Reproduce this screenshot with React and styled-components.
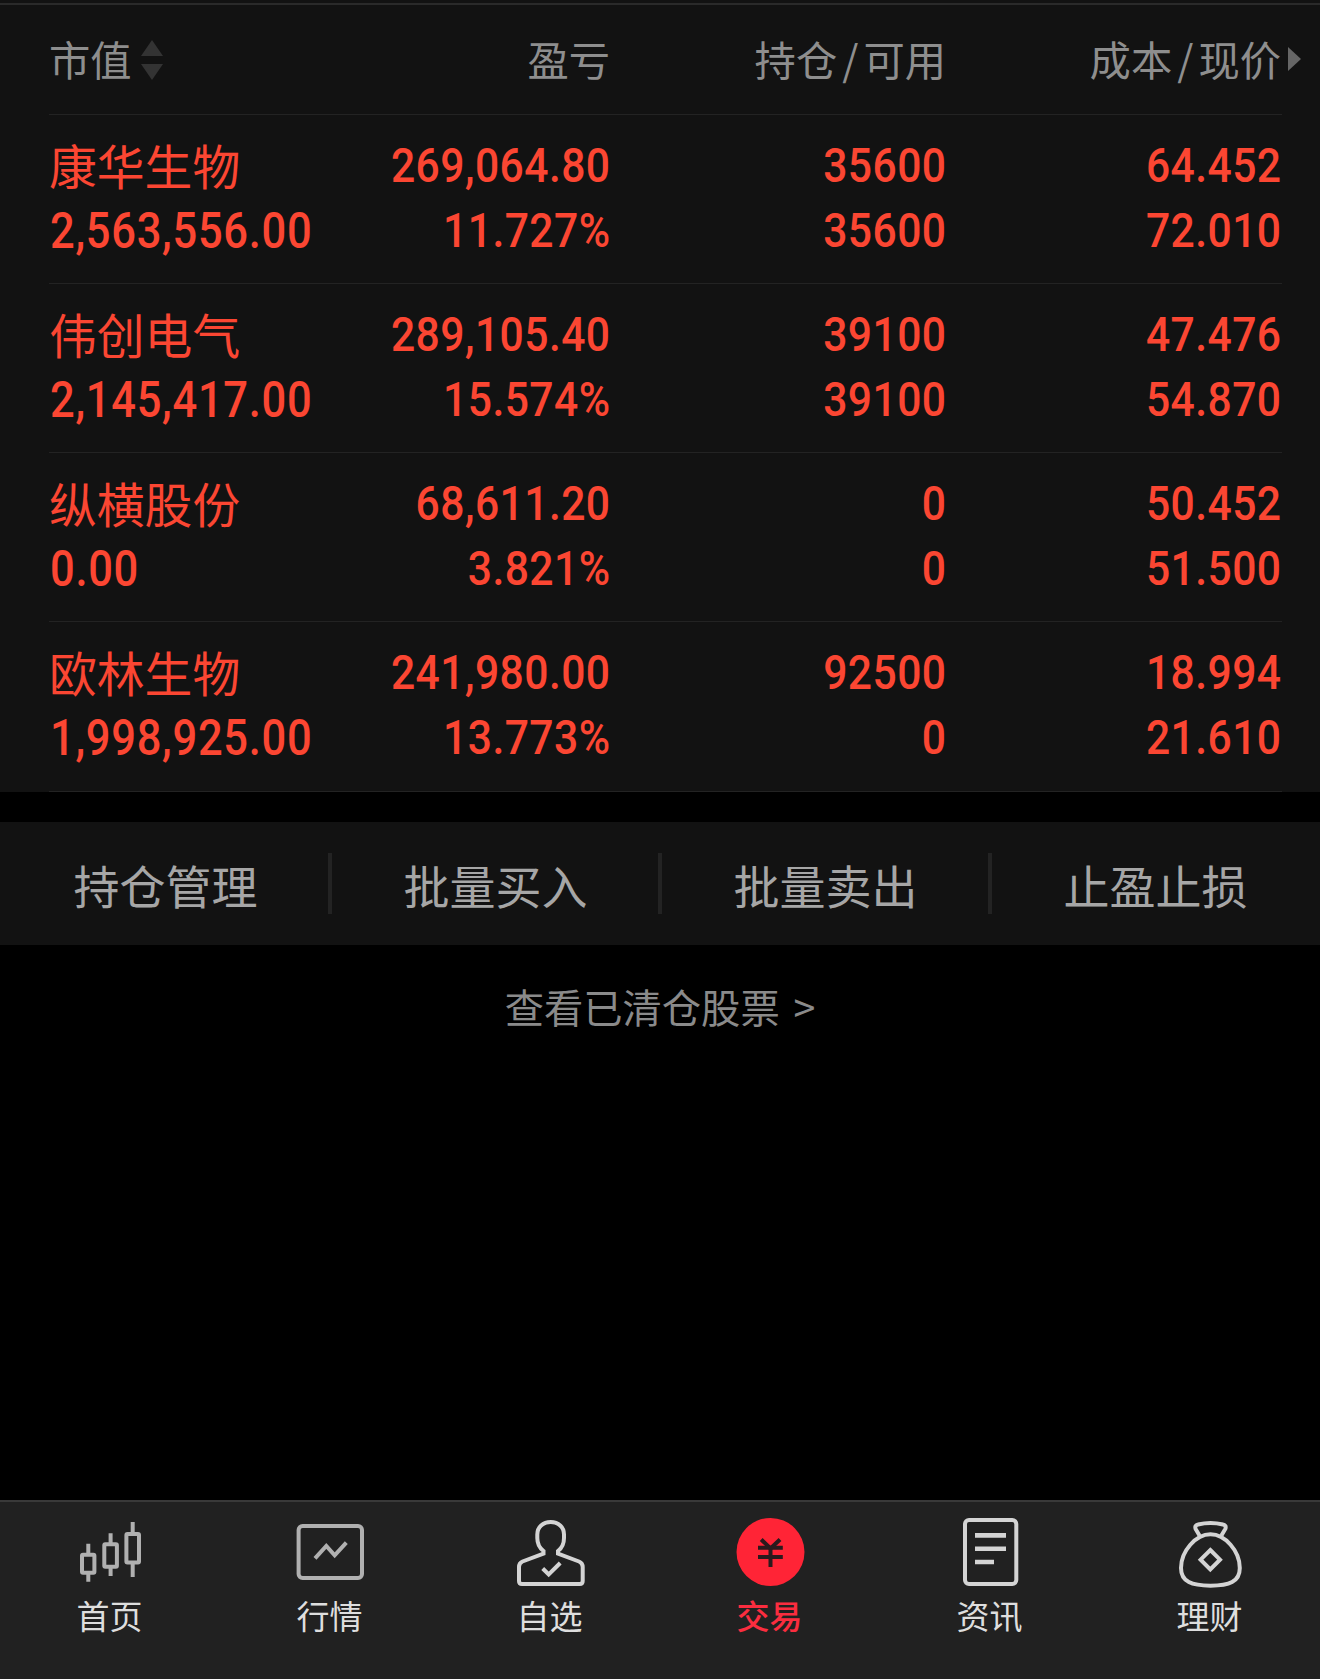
import React from 'react';
import styled, { createGlobalStyle } from 'styled-components';

const holdings = [
  {
    name: '康华生物',
    value: '2,563,556.00',
    profit: '269,064.80',
    rate: '11.727%',
    held: '35600',
    usable: '35600',
    cost: '64.452',
    price: '72.010',
  },
  {
    name: '伟创电气',
    value: '2,145,417.00',
    profit: '289,105.40',
    rate: '15.574%',
    held: '39100',
    usable: '39100',
    cost: '47.476',
    price: '54.870',
  },
  {
    name: '纵横股份',
    value: '0.00',
    profit: '68,611.20',
    rate: '3.821%',
    held: '0',
    usable: '0',
    cost: '50.452',
    price: '51.500',
  },
  {
    name: '欧林生物',
    value: '1,998,925.00',
    profit: '241,980.00',
    rate: '13.773%',
    held: '92500',
    usable: '0',
    cost: '18.994',
    price: '21.610',
  },
];

const actions = ['持仓管理', '批量买入', '批量卖出', '止盈止损'];

// Icons
const HomeIcon = () => (
  <Icon $color="#b0b0b0">
    <rect x="6" y="36.7" width="12.4" height="18" rx="1" />
    <path d="M12.3 25.7V36M12.3 56V63.7" />
    <rect x="28.3" y="26.3" width="12.6" height="22.4" rx="1" />
    <path d="M34.6 15.3V26M34.6 50V58" />
    <rect x="50.4" y="16" width="12.6" height="28.4" rx="1" />
    <path d="M56.7 4V15M56.7 45V59" />
  </Icon>
);

const MarketIcon = () => (
  <Icon $color="#b0b0b0">
    <rect x="2.6" y="8" width="63.4" height="52" rx="4" />
    <path d="M19 40.3L30.3 28L38.7 37.3L50.3 24.7" />
  </Icon>
);

const WatchIcon = () => (
  <Icon>
    <path d="M27.5 33C23.5 30 21.3 25 21.3 20V16.5C21.3 9 27 4 34.7 4S48 9 48 16.5V20C48 25 46 30 42 33V35.7L63 43.5Q66.7 45 66.7 49V63Q66.7 66 63.7 66H6Q3 66 3 63V49Q3 45 6.5 43.5L27.5 35.7Z" />
    <path d="M26.7 50.5L32.7 56.5L44.2 45" />
  </Icon>
);

const TradeIcon = () => (
  <Icon $color="#2a1a1d">
    <circle cx="34.5" cy="34" r="34" fill="#ff2436" stroke="none" />
    <path d="M25.2 21.5L34.5 30.5L44 21.5" />
    <path d="M22 29.8H46.8M22 39H46.8M34.5 29V49" />
  </Icon>
);

const NewsIcon = () => (
  <Icon>
    <rect x="9" y="2" width="51.3" height="64" rx="4" />
    <path d="M19 17.4H50M19 30.7H50M19 44H38" strokeWidth="4.6" />
  </Icon>
);

const WealthIcon = () => (
  <Icon>
    <path d="M34.5 16.3C20 16.3 5 33 5 50C5 64 16 67.7 34.5 67.7S63.8 64 63.8 50C63.8 33 49 16.3 34.5 16.3Z" />
    <path d="M23.5 17.5L19.6 11C18.8 8.5 19.6 7 22 6.5C29 4.8 40 4.8 47 6.5C49.5 7 50.2 8.5 49.3 11L45.4 17.5" />
    <path d="M34.3 32L44 41.7L34.3 51.4L24.6 41.7Z" />
  </Icon>
);

const tabs = [
  { label: '首页', icon: HomeIcon },
  { label: '行情', icon: MarketIcon },
  { label: '自选', icon: WatchIcon },
  { label: '交易', icon: TradeIcon, active: true },
  { label: '资讯', icon: NewsIcon },
  { label: '理财', icon: WealthIcon },
];

const App = () => {
  return (
    <Page>
      <GlobalStyle />
      <Holdings>
        <Header>
          <HeadCell>
            市值
            <Sort viewBox="0 0 22 40">
              <path d="M11 0L22 16H0ZM11 40L0 24H22Z" />
            </Sort>
          </HeadCell>
          <HeadCell $right>盈亏</HeadCell>
          <HeadCell $right>
            持仓<Slash>/</Slash>可用
          </HeadCell>
          <HeadCell $right>
            成本<Slash>/</Slash>现价
            <More viewBox="0 0 13 24">
              <path d="M0 0L13 12L0 24Z" />
            </More>
          </HeadCell>
        </Header>
        {holdings.map((stock) => (
          <Row key={stock.name}>
            <Cell>
              <Name>{stock.name}</Name>
              <Value>{stock.value}</Value>
            </Cell>
            <Cell $right>
              <Num>{stock.profit}</Num>
              <Num>{stock.rate}</Num>
            </Cell>
            <Cell $right>
              <Num>{stock.held}</Num>
              <Num>{stock.usable}</Num>
            </Cell>
            <Cell $right>
              <Num>{stock.cost}</Num>
              <Num>{stock.price}</Num>
            </Cell>
          </Row>
        ))}
      </Holdings>
      <Actions>
        {actions.map((action) => (
          <Action key={action}>{action}</Action>
        ))}
      </Actions>
      <Cleared>查看已清仓股票 &gt;</Cleared>
      <TabBar>
        {tabs.map(({ label, icon: TabIcon, active }) => (
          <Tab key={label} $active={active}>
            <TabIcon />
            <span>{label}</span>
          </Tab>
        ))}
      </TabBar>
    </Page>
  );
};

const GlobalStyle = createGlobalStyle`
  * {
    margin: 0;
    padding: 0;
    box-sizing: border-box;
  }
  body {
    background: #000;
    font-family: 'Noto Sans CJK SC', sans-serif;
  }
  button {
    border: none;
    background: none;
    font-family: inherit;
  }
`;

const Page = styled.div`
  display: flex;
  flex-direction: column;
  width: 1320px;
  height: 1679px;
  overflow: hidden;
  background: #000;
`;

// Holdings table
const Holdings = styled.section`
  height: 792px;
  padding: 3px 38px 0 49px;
  background: linear-gradient(#2a2a2a, #2a2a2a) 0 3px / 100% 2px no-repeat #121212;
`;
const Header = styled.div`
  display: grid;
  grid-template-columns: 300px 262px 336px 335px;
  height: 112px;
  border-bottom: 1px solid #232323;
`;
const HeadCell = styled.div`
  display: flex;
  align-items: center;
  justify-content: ${(props) => (props.$right ? 'flex-end' : 'flex-start')};
  padding: 0 ${(props) => (props.$right ? 1 : 0)}px 2px;
  font-size: 41.3px;
  color: #8e8e8e;
`;
const Slash = styled.span`
  margin: 0 5px;
`;
const Sort = styled.svg`
  width: 22px;
  height: 40px;
  margin: 4px 0 0 9px;
  fill: #333;
`;
const More = styled.svg`
  width: 13px;
  height: 24px;
  margin: 3px -20px 0 7px;
  fill: #666;
`;
const Row = styled.div`
  display: grid;
  grid-template-columns: 300px 262px 336px 335px;
  height: 169px;
  padding-top: 18px;
  border-bottom: 1px solid #232323;
  color: #fb4632;
  &:last-child {
    height: 170px;
  }
`;
const Cell = styled.div`
  padding: 0 1px;
  text-align: ${(props) => (props.$right ? 'right' : 'left')};
`;
const Name = styled.div`
  height: 65px;
  margin-left: -1px;
  font-size: 47.8px;
  line-height: 63px;
`;
// Roboto squeezed to the width of a DIN face
const Num = styled.div`
  height: 65px;
  margin-right: -0.5px;
  font-family: Roboto, sans-serif;
  font-size: 49px;
  font-weight: 500;
  letter-spacing: 0.5px;
  line-height: 65px;
  white-space: nowrap;
  transform: scaleX(0.87);
  transform-origin: right;
`;
const Value = styled(Num)`
  font-size: 50px;
  letter-spacing: 0.8px;
  line-height: 67px;
  transform-origin: left;
`;

// Shortcuts under the table
const Actions = styled.div`
  display: grid;
  grid-template-columns: repeat(4, 1fr);
  align-items: center;
  height: 123px;
  margin-top: 30px;
  background: #121212;
`;
const Action = styled.button`
  height: 61px;
  margin-right: -2px;
  padding-left: 3px;
  border-right: 4px solid #232323;
  font-size: 46px;
  line-height: 58px;
  color: #a6a6a6;
  &:last-child {
    border-right-color: transparent;
  }
`;
const Cleared = styled.button`
  height: 60px;
  margin-top: 31px;
  font-size: 39.3px;
  line-height: 60px;
  word-spacing: 5px;
  color: #8a8a8a;
`;

// Bottom navigation
const TabBar = styled.nav`
  display: grid;
  grid-template-columns: repeat(6, 1fr);
  height: 179px;
  margin-top: auto;
  border-top: 2px solid #393939;
  background: #212121;
`;
const Tab = styled.button`
  display: flex;
  flex-direction: column;
  align-items: center;
  padding-top: 16px;
  font-size: 33px;
  font-weight: ${(props) => (props.$active ? 500 : 400)};
  line-height: 48px;
  color: ${(props) => (props.$active ? '#fb2d3f' : '#dedede')};
  span {
    margin: 5px 1px 0 0;
  }
`;
const Icon = styled.svg.attrs({ viewBox: '0 0 68 68' })`
  width: 68px;
  height: 68px;
  overflow: visible;
  fill: none;
  stroke: ${(props) => props.$color || '#d4d4d4'};
  stroke-width: 4;
`;

export default App;
